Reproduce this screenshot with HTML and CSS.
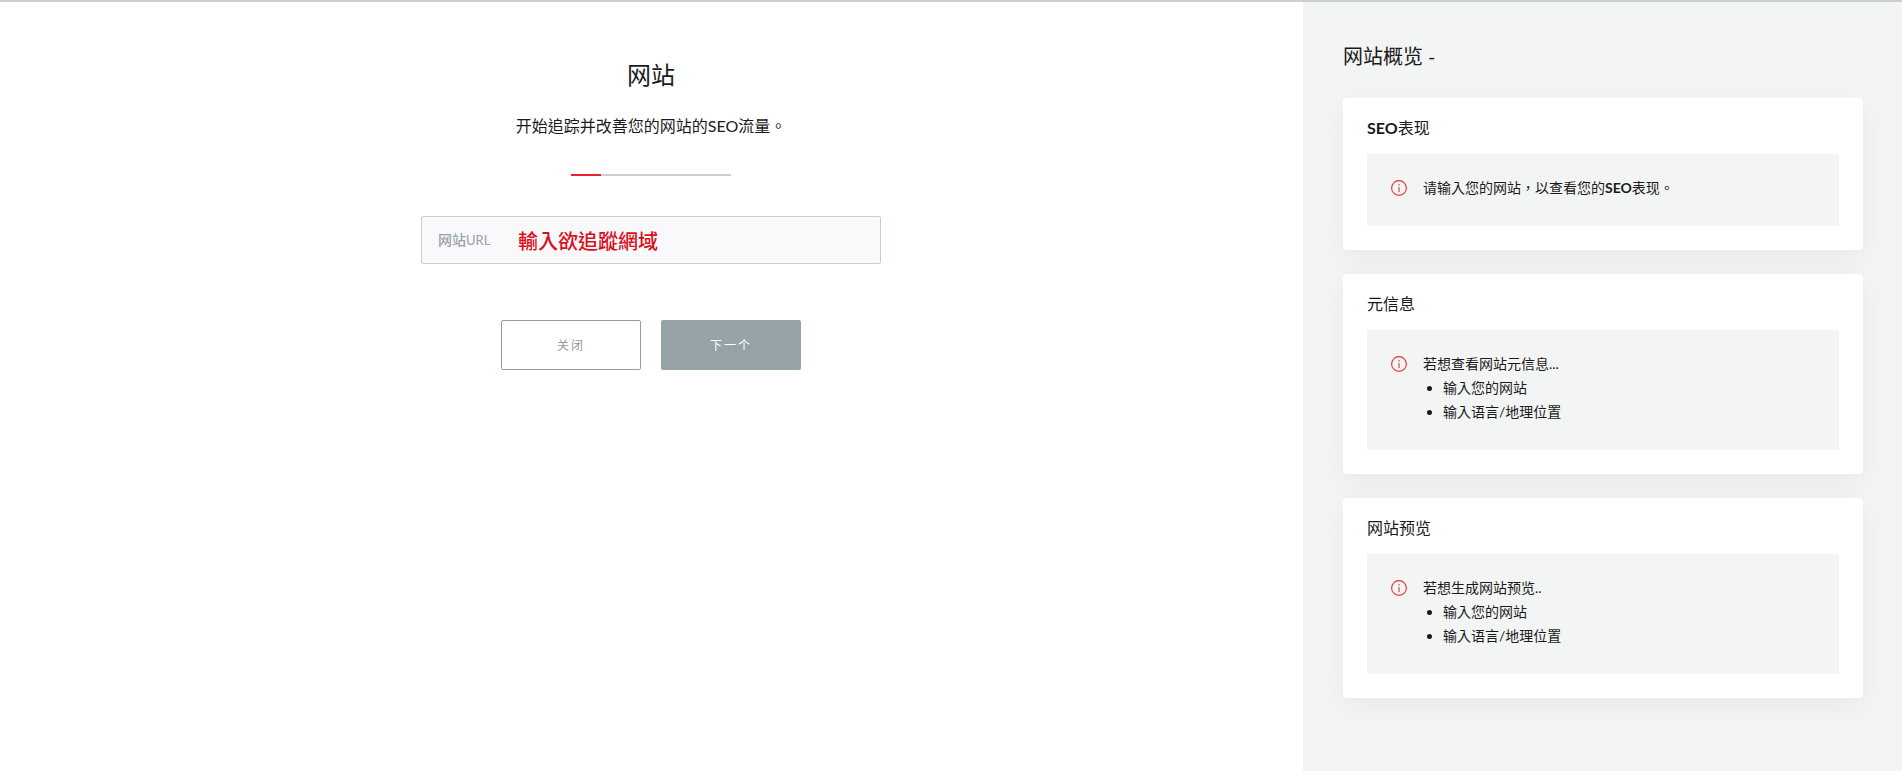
FILE: index.html
```html
<!DOCTYPE html>
<html lang="zh-TW">
<head>
    <meta charset="UTF-8">
    <meta name="viewport" content="width=device-width, initial-scale=1.0">
    <title>网站</title>
    <link rel="stylesheet" href="styles.css">
</head>
<body>
    <div class="page">
        <main class="setup">
            <h1 class="setup-title">网站</h1>
            <p class="setup-desc">开始追踪并改善您的网站的SEO流量。</p>
            <div class="progress"><div class="progress-done"></div></div>

            <div class="url-field">
                <span class="url-label">网站<span class="url-latin">URL</span></span>
                <span class="url-hint">輸入欲追蹤網域</span>
            </div>

            <div class="actions">
                <button class="btn btn-close">关闭</button>
                <button class="btn btn-next">下一个</button>
            </div>
        </main>

        <aside class="overview">
            <h2 class="overview-title">网站概览 -</h2>

            <section class="card">
                <h3 class="card-title"><b>SEO</b>表现</h3>
                <div class="notice">
                    <svg class="notice-icon" viewBox="0 0 16 16"><circle cx="8" cy="8" r="7.4"/><path d="M8 7v5M8 4v1.4"/></svg>
                    <div class="notice-text">请输入您的网站，以查看您的<b>SEO</b>表现。</div>
                </div>
            </section>

            <section class="card">
                <h3 class="card-title">元信息</h3>
                <div class="notice">
                    <svg class="notice-icon" viewBox="0 0 16 16"><circle cx="8" cy="8" r="7.4"/><path d="M8 7v5M8 4v1.4"/></svg>
                    <div class="notice-text">若想查看网站元信息...
                        <ul>
                            <li>输入您的网站</li>
                            <li>输入语言/地理位置</li>
                        </ul>
                    </div>
                </div>
            </section>

            <section class="card">
                <h3 class="card-title">网站预览</h3>
                <div class="notice">
                    <svg class="notice-icon" viewBox="0 0 16 16"><circle cx="8" cy="8" r="7.4"/><path d="M8 7v5M8 4v1.4"/></svg>
                    <div class="notice-text">若想生成网站预览..
                        <ul>
                            <li>输入您的网站</li>
                            <li>输入语言/地理位置</li>
                        </ul>
                    </div>
                </div>
            </section>
        </aside>
    </div>
</body>
</html>
```

FILE: styles.css
```css
html, body {
    height: 100%;
}

body {
    margin: 0;
    overflow: hidden;
    background: #fff;
    color: #1a1a1a;
    font-family: "Lato", "Noto Sans CJK TC", sans-serif;
}

.page {
    display: flex;
    height: 100%;
    box-sizing: border-box;
    border-top: 2px solid #c8ced1;
}

/* 左侧 */
.setup {
    flex: 1;
    display: flex;
    flex-direction: column;
    align-items: center;
    padding: 57px 1px 0 0;
}

.setup-title {
    margin: 0;
    font-size: 24px;
    font-weight: 400;
    line-height: 32px;
}

.setup-desc {
    margin: 23px 0 0;
    font-size: 16px;
    line-height: 24px;
}

.progress {
    width: 160px;
    height: 2px;
    margin-top: 36px;
    background: #c8ced1;
}

.progress-done {
    width: 30px;
    height: 2px;
    background: #e8212e;
}

.url-field {
    display: flex;
    align-items: center;
    width: 460px;
    height: 48px;
    margin-top: 40px;
    padding-left: 16px;
    box-sizing: border-box;
    background: #f9f9fc;
    border: 1px solid #c8ced1;
    border-radius: 2px;
}

.url-label {
    width: 80px;
    margin-bottom: 2px;
    color: #97a3a6;
    font-size: 14px;
    font-weight: 500;
}

.url-latin {
    font-size: 13px;
    font-weight: 400;
}

.url-hint {
    color: #d9101c;
    font-size: 20px;
    font-weight: 500;
}

.actions {
    display: flex;
    gap: 20px;
    margin-top: 56px;
}

.btn {
    width: 140px;
    height: 50px;
    padding: 0 0 2px;
    border-radius: 2px;
    font-family: inherit;
    font-size: 12px;
    letter-spacing: 2px;
}

.btn-close {
    background: #fff;
    border: 1px solid #8f9fa4;
    color: #8f9a9d;
}

.btn-next {
    background: #96a3a6;
    border: none;
    color: #fff;
}

/* 右侧 */
.overview {
    width: 599px;
    box-sizing: border-box;
    padding: 40px 39px 0 40px;
    background: #f3f4f4;
}

.overview-title {
    margin: 0 0 28px;
    font-size: 20px;
    font-weight: 400;
    line-height: 28px;
}

.card {
    margin-bottom: 24px;
    padding: 20px 24px 24px;
    background: #fff;
    border-radius: 4px;
    box-shadow: 0 8px 30px rgba(0, 0, 0, 0.05);
}

.card-title {
    margin: 0 0 16px;
    font-size: 16px;
    font-weight: 400;
    line-height: 20px;
}

.notice {
    display: flex;
    gap: 16px;
    padding: 22px 24px 26px;
    background: #f3f4f4;
    font-size: 14px;
    line-height: 24px;
}

.notice-icon {
    flex: none;
    width: 16px;
    height: 16px;
    margin-top: 4px;
    fill: none;
    stroke: #e8303a;
    stroke-width: 1.1;
}

.notice-text ul {
    margin: 0;
    padding-left: 20px;
}
```
